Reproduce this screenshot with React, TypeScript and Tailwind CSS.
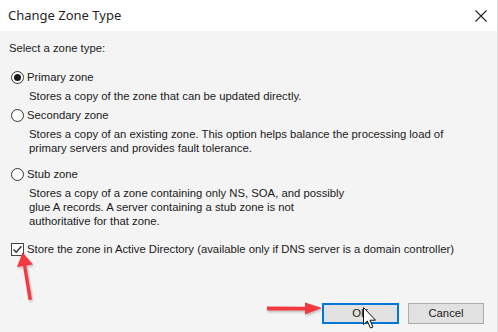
import React from 'react';

const font = { fontFamily: '"Liberation Sans", Arial, sans-serif' };

const Radio = ({ checked }: { checked?: boolean }) => (
  <span className="ml-[2px] flex h-[13px] w-[13px] shrink-0 items-center justify-center rounded-full border border-[#333333] bg-white">
    {checked && <span className="h-[7px] w-[7px] rounded-full bg-[#1a1a1a]" />}
  </span>
);

const Checkbox = () => (
  <span className="ml-[2px] flex h-[13px] w-[13px] shrink-0 items-center justify-center border border-[#444444] bg-white">
    <svg width="11" height="11" viewBox="0 0 11 11">
      <path d="M1.5 5.5 L4.2 8.3 L9.5 2.2" fill="none" stroke="#333" strokeWidth="1.4" />
    </svg>
  </span>
);

const Option = ({ label, checked }: { label: string; checked?: boolean }) => (
  <div className="flex h-[16px] items-center gap-[3px]">
    <Radio checked={checked} />
    <span>{label}</span>
  </div>
);

const Desc = ({ lines }: { lines: string[] }) => (
  <div className="mt-[4px] pl-[20px]">
    {lines.map((l) => (
      <div key={l} className="h-[14px] leading-[14px]">
        {l}
      </div>
    ))}
  </div>
);

export default function App() {
  return (
    <div
      className="relative flex h-[332px] w-[498px] flex-col overflow-hidden border-r border-[#dcdcdc] bg-[#f4f4f4] text-[11.3px] text-[#1a1a1a]"
      style={font}
    >
      <div className="flex h-[31px] shrink-0 items-center justify-between bg-white pl-[8px] pr-[10px]">
        <span className="text-[13px] text-[#1f1f1f]" style={{ fontFamily: '"Noto Sans", sans-serif' }}>
          Change Zone Type
        </span>
        <svg width="12" height="12" viewBox="0 0 12 12">
          <path d="M0.5 0.5 L11.5 11.5 M11.5 0.5 L0.5 11.5" stroke="#222" strokeWidth="1.1" />
        </svg>
      </div>

      <div className="flex flex-1 flex-col pl-[9px] pt-[10px]">
        <div className="h-[14px] leading-[14px]">Select a zone type:</div>

        <div className="mt-[14px]">
          <Option label="Primary zone" checked />
          <Desc lines={['Stores a copy of the zone that can be updated directly.']} />
        </div>
        <div className="mt-[4px]">
          <Option label="Secondary zone" />
          <Desc
            lines={[
              'Stores a copy of an existing zone. This option helps balance the processing load of',
              'primary servers and provides fault tolerance.',
            ]}
          />
        </div>
        <div className="mt-[11px]">
          <Option label="Stub zone" />
          <Desc
            lines={[
              'Stores a copy of a zone containing only NS, SOA, and possibly',
              'glue A records. A server containing a stub zone is not',
              'authoritative for that zone.',
            ]}
          />
        </div>

        <div className="mt-[13px] flex h-[16px] items-center gap-[3px]">
          <Checkbox />
          <span>Store the zone in Active Directory (available only if DNS server is a domain controller)</span>
        </div>

        <div className="flex-1" />

        <div className="flex justify-end gap-[9px] pb-[8px] pr-[13px]">
          <button className="h-[21px] w-[77px] border-2 border-[#0078d7] bg-[#e1e1e1] text-[11.3px] text-[#1a1a1a]">
            OK
          </button>
          <button className="h-[21px] w-[76px] border border-[#adadad] bg-[#e1e1e1] text-[11.3px] text-[#1a1a1a]">
            Cancel
          </button>
        </div>
      </div>

      {/* annotation arrows and cursor overlay */}
      <svg className="pointer-events-none absolute left-0 top-0" width="498" height="332" viewBox="0 0 498 332">
        <defs>
          <filter id="sh" x="-20%" y="-20%" width="140%" height="140%">
            <feDropShadow dx="1" dy="1.5" stdDeviation="1.2" floodColor="#000" floodOpacity="0.25" />
          </filter>
        </defs>
        <g fill="#f2393f" filter="url(#sh)">
          <path d="M28.5 300 L32 299.5 L26.3 265.5 L33 264.5 L22.5 252.5 L17 267 L23 266 L28.5 300 Z" />
          <path d="M267 306.4 L305 306.8 L305 302.5 L322 308 L305 314.5 L305 310.6 L267 310.4 Z" />
        </g>
        <path
          d="M363.5 307.5 L363.5 324.5 L367.3 321 L370.4 328 L373 327 L370 320.2 L375.5 320.2 Z"
          fill="#fff"
          stroke="#111"
          strokeWidth="1"
          strokeLinejoin="round"
        />
      </svg>
    </div>
  );
}
